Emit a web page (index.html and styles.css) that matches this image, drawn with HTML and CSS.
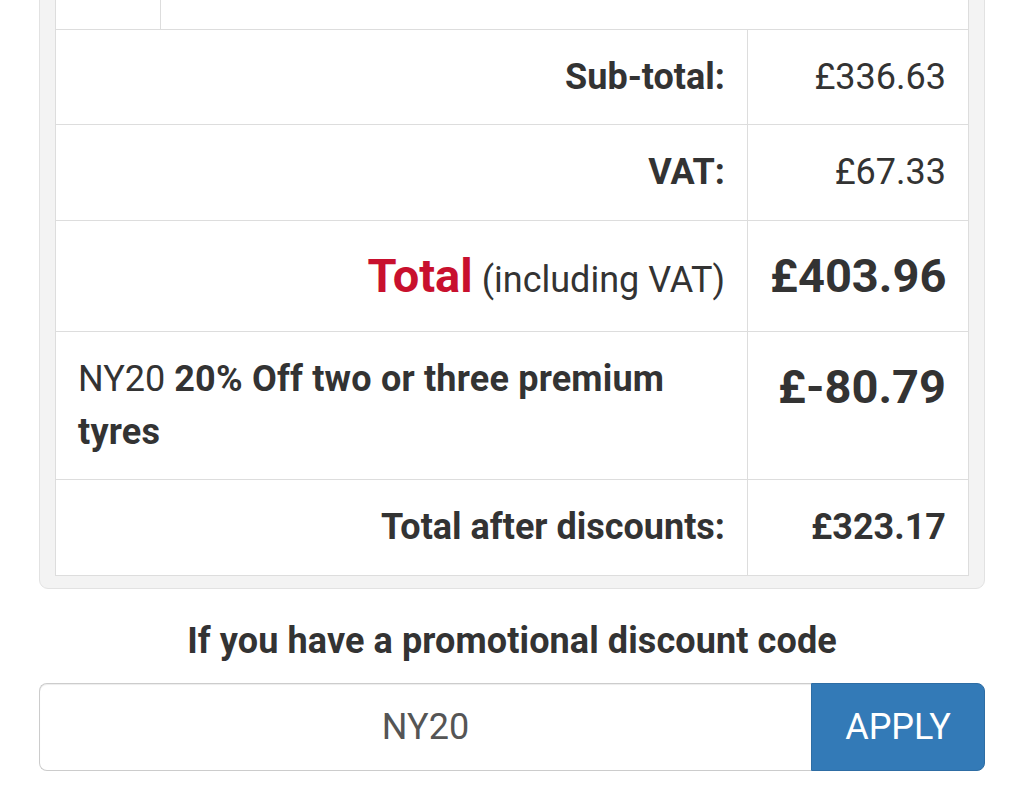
FILE: index.html
```html
<!DOCTYPE html>
<html lang="en">
<head>
<meta charset="utf-8">
<title>Basket totals</title>
<link rel="stylesheet" href="styles.css">
</head>
<body>
<div class="page">
  <div class="panel">
    <table class="totals">
      <colgroup>
        <col class="c1">
        <col class="c2">
        <col class="c3">
      </colgroup>
      <tbody>
        <tr>
          <td></td>
          <td colspan="2" class="item">Fitting, balancing, valves &amp; disposal (per tyre, by appointment)</td>
        </tr>
        <tr>
          <td colspan="2" class="label">Sub-total:</td>
          <td class="amount">£336.63</td>
        </tr>
        <tr>
          <td colspan="2" class="label">VAT:</td>
          <td class="amount">£67.33</td>
        </tr>
        <tr>
          <td colspan="2" class="label"><span class="total-word">Total</span> <span class="incl">(including VAT)</span></td>
          <td class="amount"><span class="big">£403.96</span></td>
        </tr>
        <tr class="discount">
          <td colspan="2" class="desc">NY20 <strong>20% Off two or three premium tyres</strong></td>
          <td class="amount top"><span class="big">£-80.79</span></td>
        </tr>
        <tr>
          <td colspan="2" class="label">Total after discounts:</td>
          <td class="amount bold">£323.17</td>
        </tr>
      </tbody>
    </table>
  </div>

  <h3 class="promo-title">If you have a promotional discount code</h3>

  <form class="promo">
    <input class="promo-input" type="text" value="NY20">
    <button class="promo-btn" type="button">APPLY</button>
  </form>
</div>
</body>
</html>
```

FILE: styles.css
```css
html, body {
  margin: 0;
  padding: 0;
  background: #ffffff;
}

body {
  font-family: Roboto, "Noto Sans", "Liberation Sans", sans-serif;
  font-size: 36px;
  line-height: 1.46;
  color: #333333;
  overflow: hidden;
}

.page {
  padding: 0 39px;
}

.panel {
  margin-top: -83px;
  background: #f3f3f3;
  border: 1px solid #e2e2e2;
  border-radius: 9px;
  padding: 15px 15px 12px;
}

.totals {
  width: 100%;
  border-collapse: collapse;
  table-layout: fixed;
  background: #ffffff;
}

.c1 { width: 105px; }
.c2 { width: 587px; }

.totals td {
  border: 1px solid #dddddd;
  padding: 21px 22px;
  vertical-align: middle;
}

.totals td.item {
  white-space: nowrap;
  overflow: hidden;
  padding-top: 17px;
  padding-bottom: 25px;
}

.label {
  text-align: right;
  font-weight: 700;
}

.amount {
  text-align: right;
}

.totals td.top {
  vertical-align: top;
}

.bold {
  font-weight: 700;
}

.total-word {
  color: #c8102e;
  font-size: 47px;
  font-weight: 700;
}

.incl {
  font-weight: 400;
}

.big {
  font-size: 47px;
  font-weight: 700;
}

.totals td.desc {
  text-align: left;
  vertical-align: top;
}

.desc strong {
  font-weight: 700;
  letter-spacing: 0.2px;
}

.promo-title {
  margin: 26px 0 16px;
  text-align: center;
  font-size: 36px;
  font-weight: 700;
  line-height: 1.46;
  letter-spacing: 0.1px;
}

.promo {
  display: flex;
  height: 88px;
  margin: 0;
}

.promo-input {
  flex: 1;
  min-width: 0;
  box-sizing: border-box;
  height: 88px;
  border: 1px solid #cccccc;
  border-right: 0;
  border-radius: 8px 0 0 8px;
  background: #ffffff;
  font-family: inherit;
  font-size: 36px;
  color: #555555;
  text-align: center;
  padding: 0 20px;
  box-shadow: inset 0 1px 1px rgba(0, 0, 0, 0.075);
}

.promo-btn {
  width: 174px;
  height: 88px;
  box-sizing: border-box;
  border: 1px solid #2e6da4;
  border-radius: 0 8px 8px 0;
  background: #337ab7;
  color: #ffffff;
  font-family: inherit;
  font-size: 36px;
  padding: 0;
}
```
